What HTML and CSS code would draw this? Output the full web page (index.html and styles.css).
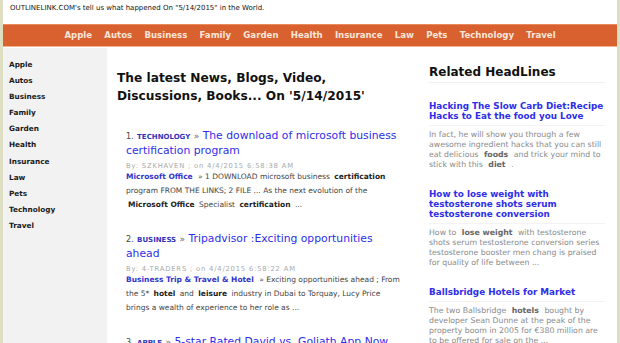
FILE: index.html
```html
<!DOCTYPE html>
<html lang="en">
<head>
  <meta charset="UTF-8" />
  <title>OUTLINELINK.COM - 5/14/2015</title>
  <link rel="stylesheet" href="styles.css">
</head>
<body>
  <div class="page">
    <div class="topline">OUTLINELINK.COM's tell us what happened On "5/14/2015" in the World.</div>

    <nav class="topnav">
      <a href="#">Apple</a>
      <a href="#">Autos</a>
      <a href="#">Business</a>
      <a href="#">Family</a>
      <a href="#">Garden</a>
      <a href="#">Health</a>
      <a href="#">Insurance</a>
      <a href="#">Law</a>
      <a href="#">Pets</a>
      <a href="#">Technology</a>
      <a href="#">Travel</a>
    </nav>

    <div class="columns">
      <aside class="sidebar">
        <a href="#">Apple</a>
        <a href="#">Autos</a>
        <a href="#">Business</a>
        <a href="#">Family</a>
        <a href="#">Garden</a>
        <a href="#">Health</a>
        <a href="#">Insurance</a>
        <a href="#">Law</a>
        <a href="#">Pets</a>
        <a href="#">Technology</a>
        <a href="#">Travel</a>
      </aside>

      <main class="main">
        <h1>The latest News, Blogs, Video, Discussions, Books... On '5/14/2015'</h1>

        <div class="item">
          <div class="item-title">
            <span class="num">1.</span> <a class="cat" href="#">TECHNOLOGY</a> <span class="raquo">&raquo;</span>
            <a class="headline" href="#">The download of microsoft business certification program</a>
          </div>
          <div class="meta">By: SZKHAVEN ; on 4/4/2015 6:58:38 AM</div>
          <p class="desc"><a class="src" href="#">Microsoft Office</a> &raquo; 1 DOWNLOAD microsoft business <b>certification</b> program FROM THE LINKS; 2 FILE ... As the next evolution of the <b>Microsoft Office</b> Specialist <b>certification</b> ...</p>
        </div>

        <div class="item">
          <div class="item-title">
            <span class="num">2.</span> <a class="cat" href="#">BUSINESS</a> <span class="raquo">&raquo;</span>
            <a class="headline" href="#">Tripadvisor :Exciting opportunities ahead</a>
          </div>
          <div class="meta">By: 4-TRADERS ; on 4/4/2015 6:58:22 AM</div>
          <p class="desc"><a class="src" href="#">Business Trip &amp; Travel &amp; Hotel</a> &raquo; Exciting opportunities ahead ; From the 5* <b>hotel</b> and <b>leisure</b> industry in Dubai to Torquay, Lucy Price brings a wealth of experience to her role as ...</p>
        </div>

        <div class="item">
          <div class="item-title">
            <span class="num">3.</span> <a class="cat" href="#">APPLE</a> <span class="raquo">&raquo;</span>
            <a class="headline" href="#">5-star Rated David vs. Goliath App Now on iTunes</a>
          </div>
        </div>
      </main>

      <section class="related">
        <h2>Related HeadLines</h2>

        <div class="rel">
          <a class="rel-title" href="#">Hacking The Slow Carb Diet:Recipe Hacks to Eat the food you Love</a>
          <p class="rel-desc">In fact, he will show you through a few awesome ingredient hacks that you can still eat delicious <b>foods</b> and trick your mind to stick with this <b>diet</b> .</p>
        </div>

        <div class="rel">
          <a class="rel-title" href="#">How to lose weight with testosterone shots serum testosterone conversion</a>
          <p class="rel-desc">How to <b>lose weight</b> with testosterone shots serum testosterone conversion series testosterone booster men chang is praised for quality of life between ...</p>
        </div>

        <div class="rel">
          <a class="rel-title" href="#">Ballsbridge Hotels for Market</a>
          <p class="rel-desc">The two Ballsbridge <b>hotels</b> bought by developer Sean Dunne at the peak of the property boom in 2005 for &euro;380 million are to be offered for sale on the ...</p>
        </div>
      </section>
    </div>
  </div>
</body>
</html>
```

FILE: styles.css
```css
body {
  margin: 0;
  background: #fff;
  font-family: "DejaVu Sans", Verdana, sans-serif;
  color: #222;
  overflow: hidden;
}

a {
  text-decoration: none;
}

.page {
  width: 614px;
  height: 343px;
  border-left: 3px solid #dedfc2;
  border-right: 3px solid #dedfc2;
  overflow: hidden;
}

.topline {
  height: 24px;
  padding-left: 7px;
  font-size: 7px;
  line-height: 16px;
  color: #111;
}

.topnav {
  display: flex;
  justify-content: center;
  gap: 12.2px;
  height: 21px;
  background: #d9602f;
  border-top: 1px solid #e98a5e;
  border-bottom: 1px solid #f2b393;
}

.topnav a {
  color: #fbe6da;
  font-size: 8.6px;
  font-weight: bold;
  line-height: 21px;
}

.columns {
  display: flex;
  margin-top: 1px;
  height: 296px;
}

.sidebar {
  width: 104px;
  flex: none;
  background: #f2f2f2;
  display: flex;
  flex-direction: column;
  padding: 9px 0 0 6px;
  box-sizing: border-box;
}

.sidebar a {
  color: #1a1a1a;
  font-size: 7.3px;
  font-weight: bold;
  line-height: 16.1px;
}

.main {
  width: 312px;
  flex: none;
  padding: 21px 14px 0 10px;
  box-sizing: border-box;
}

.main h1 {
  margin: 0 0 24px;
  font-size: 12.2px;
  line-height: 18px;
  color: #111;
}

.item {
  padding-left: 9px;
  margin-bottom: 20px;
}

.item-title {
  font-size: 10.8px;
  line-height: 14px;
  color: #444;
}

.num {
  font-size: 8px;
}

.cat {
  font-size: 7px;
  font-weight: bold;
  color: #3333bb;
}

.raquo {
  font-size: 9px;
  color: #666;
}

.headline {
  color: #2e2ee8;
}

.meta {
  margin-top: 4px;
  font-size: 6.8px;
  letter-spacing: 0.8px;
  line-height: 8px;
  color: #aaa;
}

.desc {
  margin: 0;
  font-size: 7.5px;
  line-height: 14px;
  color: #444;
}

.desc b {
  padding: 0 2px;
  color: #222;
}

.src {
  padding-right: 3px;
  font-weight: bold;
  color: #3333cc;
}

.related {
  width: 176px;
  flex: none;
  padding: 17px 0 0 10px;
}

.related h2 {
  margin: 0;
  padding-bottom: 3px;
  border-bottom: 1px solid #f0f0f0;
  font-size: 12px;
  line-height: 14px;
  color: #111;
}

.rel {
  margin-top: 18px;
}

.rel + .rel {
  margin-top: 19px;
}

.rel-title {
  display: block;
  padding-bottom: 4px;
  border-bottom: 1px solid #f3f3f3;
  font-size: 8.8px;
  font-weight: bold;
  line-height: 10px;
  color: #2e2ee8;
}

.rel-desc {
  margin: 4px 0 0;
  font-size: 7.8px;
  line-height: 10px;
  color: #8a8a8a;
}

.rel-desc b {
  padding: 0 3px;
  color: #666;
}
```
